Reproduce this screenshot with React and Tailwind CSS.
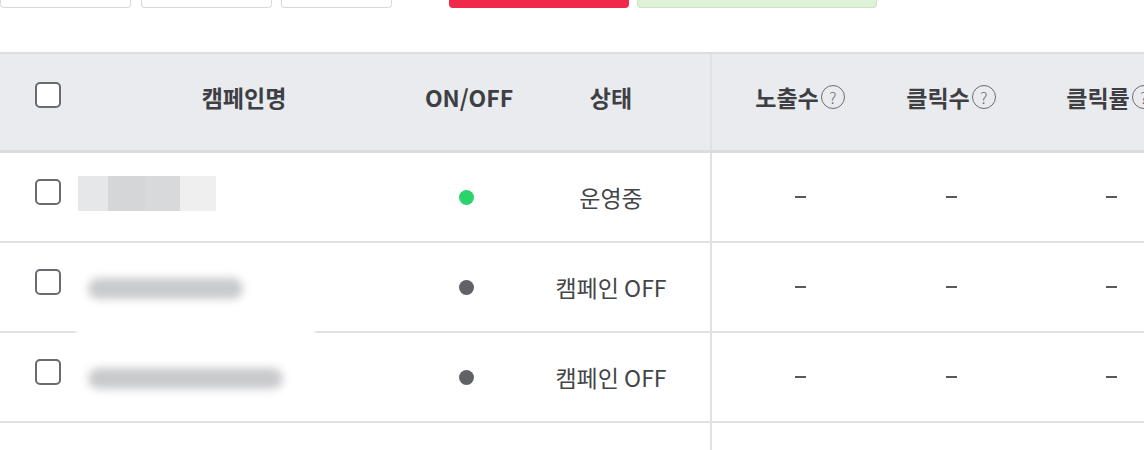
import React from 'react';

const font = { fontFamily: '"Noto Sans CJK KR", "Noto Sans", sans-serif' };

const Checkbox = ({ className = '' }) => (
  <span className={`block w-[26px] h-[26px] rounded-[5px] border-2 border-[#6a6b70] bg-white ${className}`} />
);

const Help = () => (
  <span className="ml-[2px] shrink-0 inline-flex items-center justify-center w-[24px] h-[24px] rounded-full border border-[#6b6c70] text-[16px] font-light leading-none text-[#6b6c70]">
    ?
  </span>
);

const Dash = () => <span className="block w-[11px] h-[2px] bg-[#58595d]" />;

const cols = {
  check: 'w-[78px] shrink-0 pl-[35px]',
  name: 'w-[334px] shrink-0',
  onoff: 'w-[114px] shrink-0 flex justify-center',
  status: 'w-[170px] shrink-0 flex justify-center',
  gap: 'w-[16px] shrink-0 self-stretch border-r-2 border-[#e1e1e3]',
  a: 'w-[176px] shrink-0 flex justify-center',
  b: 'w-[126px] shrink-0 flex justify-center',
  c: 'w-[194px] shrink-0 flex justify-center',
};

const rows = [
  { status: '운영중', on: true, blur: 'mosaic' },
  { status: '캠페인 OFF', on: false, blur: 'short' },
  { status: '캠페인 OFF', on: false, blur: 'long' },
];

const BlurName = ({ kind }) => {
  if (kind === 'mosaic') {
    return (
      <div className="flex h-[35px] -mt-[8px]">
        <div className="w-[30px] bg-[#e6e7e9]" />
        <div className="w-[37px] bg-[#d5d6d8]" />
        <div className="w-[35px] bg-[#d8d9db]" />
        <div className="w-[36px] bg-[#efefef]" />
      </div>
    );
  }
  return (
    <div className="pl-[10px] pt-[2px]">
      <div
        className={`h-[21px] rounded-full bg-[#c9cacc] blur-[4px] ${kind === 'short' ? 'w-[155px]' : 'w-[195px]'}`}
      />
    </div>
  );
};

export default function App() {
  return (
    <div className="w-[1144px] h-[450px] overflow-hidden bg-white" style={font}>
      {/* top buttons */}
      <div className="h-[52px] flex items-start">
        <div className="w-[131px] h-[8px] border-x border-b border-[#d9d9db] rounded-b-[4px] bg-white" />
        <div className="ml-[10px] w-[131px] h-[8px] border-x border-b border-[#d9d9db] rounded-b-[4px] bg-white" />
        <div className="ml-[9px] w-[111px] h-[8px] border-x border-b border-[#d9d9db] rounded-b-[4px] bg-white" />
        <div className="ml-[57px] w-[180px] h-[8px] rounded-b-[4px] bg-[#f0284a]" />
        <div className="ml-[8px] w-[240px] h-[8px] border-x border-b border-[#c9e6bf] rounded-b-[4px] bg-[#dff1d9]" />
      </div>

      {/* header */}
      <div className="flex items-center h-[101px] pb-[10px] bg-[#e9ebee] border-t-2 border-[#dcdde0] border-b-[3px] border-b-[#dcdcde] text-[23px] font-bold text-[#3d3f44]">
        <div className={cols.check}><Checkbox className="-mt-[4px]" /></div>
        <div className={`${cols.name} text-center pr-[2px]`}>캠페인명</div>
        <div className={cols.onoff}>ON/OFF</div>
        <div className={cols.status}>상태</div>
        <div className={`${cols.gap} -mb-[10px]`} />
        <div className={`${cols.a} items-center`}>노출수<Help /></div>
        <div className={`${cols.b} items-center`}>클릭수<Help /></div>
        <div className={`${cols.c} items-center`}>클릭률<Help /></div>
      </div>

      {/* body rows */}
      {rows.map((r, i) => (
        <div
          key={i}
          className="relative flex items-center h-[90px] border-b-2 border-[#e1e1e3] text-[23px] text-[#444548]"
        >
          <div className={cols.check}><Checkbox className="-mt-[10px]" /></div>
          <div className={`${cols.name} self-stretch flex items-center`}>
            <BlurName kind={r.blur} />
          </div>
          <div className={cols.onoff}>
            <span className={`block w-[15px] h-[15px] rounded-full -ml-[5px] ${r.on ? 'bg-[#2bd46a]' : 'bg-[#616266]'}`} />
          </div>
          <div className={cols.status}>{r.status}</div>
          <div className={cols.gap} />
          <div className={cols.a}><Dash /></div>
          <div className={cols.b}><Dash /></div>
          <div className={cols.c}><Dash /></div>
          {i === 1 && (
            <div className="absolute left-[76px] -bottom-[8px] w-[239px] h-[14px] bg-white/95 blur-[1px]" />
          )}
        </div>
      ))}
      <div className="flex h-[40px]">
        <div className="w-[696px] shrink-0" />
        <div className="w-[16px] shrink-0 border-r-2 border-[#e1e1e3]" />
      </div>
    </div>
  );
}
